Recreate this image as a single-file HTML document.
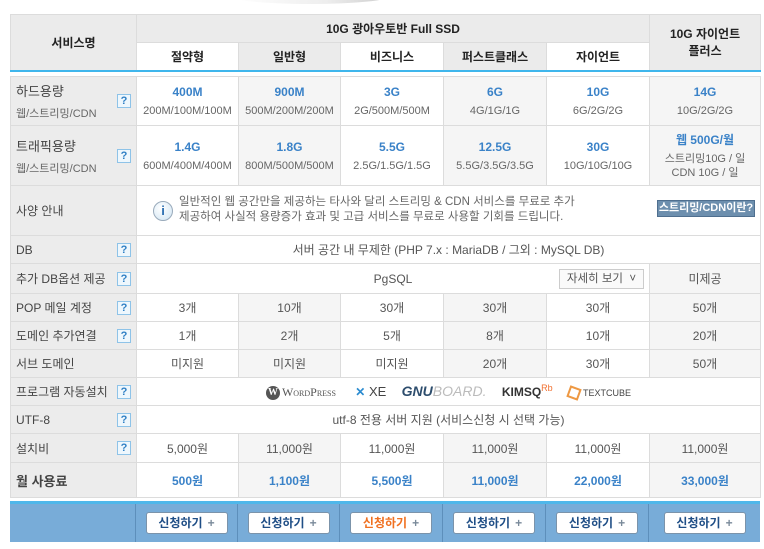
<!DOCTYPE html>
<html><head><meta charset="utf-8">
<style>
*{margin:0;padding:0;box-sizing:border-box}
body{width:764px;height:549px;background:#fff;font-family:"Liberation Sans","Noto Sans CJK KR",sans-serif;font-size:12px;color:#555;position:relative;overflow:hidden}
table{border-collapse:collapse;table-layout:fixed;position:absolute;left:10px;width:750px}
td{border:1px solid #dcdcdc;text-align:center;vertical-align:middle;padding:0}
.g{background:#f5f5f5}
.lab{background:#ececec;text-align:left;padding-left:5px;color:#444;font-size:12px;position:relative}
.q{position:absolute;right:5px;top:50%;margin-top:-7px;width:14px;height:14px;border:1px solid #8ec3e8;background:#eef7fd;color:#2f7fc4;font-weight:bold;font-size:11px;line-height:12px;text-align:center}
.b{color:#3a82c8;font-weight:bold;font-size:12px}
.s{font-size:11px;color:#666;margin-top:6px}
#hd td{background:#ebebeb;color:#222;font-weight:bold;font-size:12px}
#hd td.w{background:#fff}
#bar{position:absolute;left:10px;top:501px;width:750px;height:41px;background:#78acd8;border-top:3px solid #4fb7ea;display:flex}
#bar div{border-right:1px solid #5d8fbb;height:100%;display:flex;align-items:center;justify-content:center}
.btn{width:82px;height:22px;background:#fff;border:1px solid #7b93aa;border-radius:3px;font-weight:bold;color:#1f4e86;font-size:12px;line-height:20px;text-align:center}
.btn i{font-style:normal;color:#7a8a9a;margin-left:5px}
</style></head><body>
<div style="position:absolute;left:230px;top:-12px;width:160px;height:16px;border-radius:50%;background:linear-gradient(90deg,#fff,#ddd 60%,#999);opacity:.5"></div>
<table id="hd" style="top:14px;border-bottom:2px solid #3fb6ec">
<colgroup><col style="width:126px"><col style="width:102px"><col style="width:102px"><col style="width:103px"><col style="width:103px"><col style="width:103px"><col style="width:111px"></colgroup>
<tr style="height:28px"><td rowspan="2">서비스명</td><td colspan="5">10G 광아우토반 Full SSD</td><td rowspan="2">10G 자이언트<br>플러스</td></tr>
<tr style="height:28px"><td class="w">절약형</td><td>일반형</td><td class="w">비즈니스</td><td>퍼스트클래스</td><td class="w">자이언트</td></tr>
</table>
<div style="position:absolute;left:10px;top:70px;width:750px;height:2px;background:#3fb6ec"></div>
<table style="top:76px">
<colgroup><col style="width:126px"><col style="width:102px"><col style="width:102px"><col style="width:103px"><col style="width:103px"><col style="width:103px"><col style="width:111px"></colgroup>
<tr style="height:49px"><td class="lab"><div style="font-size:13px">하드용량</div><div class="s" style="margin-top:5px">웹/스트리밍/CDN</div><span class="q">?</span></td>
<td><div class="b">400M</div><div class="s">200M/100M/100M</div></td>
<td class="g"><div class="b">900M</div><div class="s">500M/200M/200M</div></td>
<td><div class="b">3G</div><div class="s">2G/500M/500M</div></td>
<td class="g"><div class="b">6G</div><div class="s">4G/1G/1G</div></td>
<td><div class="b">10G</div><div class="s">6G/2G/2G</div></td>
<td class="g"><div class="b">14G</div><div class="s">10G/2G/2G</div></td></tr>
<tr style="height:60px"><td class="lab"><div style="font-size:13px">트래픽용량</div><div class="s" style="margin-top:5px">웹/스트리밍/CDN</div><span class="q">?</span></td>
<td><div class="b">1.4G</div><div class="s">600M/400M/400M</div></td>
<td class="g"><div class="b">1.8G</div><div class="s">800M/500M/500M</div></td>
<td><div class="b">5.5G</div><div class="s">2.5G/1.5G/1.5G</div></td>
<td class="g"><div class="b">12.5G</div><div class="s">5.5G/3.5G/3.5G</div></td>
<td><div class="b">30G</div><div class="s">10G/10G/10G</div></td>
<td class="g"><div class="b">웹 500G/월</div><div class="s" style="margin-top:4px;line-height:14px">스트리밍10G / 일<br>CDN 10G / 일</div></td></tr>
<tr style="height:50px"><td class="lab">사양 안내</td><td colspan="6" style="text-align:left;position:relative">
<div style="position:absolute;left:16px;top:15px;width:20px;height:20px;border-radius:50%;background:radial-gradient(circle at 40% 35%,#fff,#cfe4f3);border:1px solid #9ab;color:#2a6db0;font-weight:bold;text-align:center;line-height:18px;font-size:13px">i</div>
<div style="position:absolute;left:42px;top:9px;font-size:11.5px;color:#666;line-height:15px">일반적인 웹 공간만을 제공하는 타사와 달리 스트리밍 &amp; CDN 서비스를 무료로 추가<br>제공하여 사실적 용량증가 효과 및 고급 서비스를 무료로 사용할 기회를 드립니다.</div>
<div style="position:absolute;right:5px;top:14px;width:98px;height:17px;background:#6d8fae;border:1px solid #4f6f8f;color:#fff;font-weight:bold;font-size:11px;line-height:15px;text-align:center">스트리밍/CDN이란?</div></td></tr>
<tr style="height:28px"><td class="lab">DB<span class="q">?</span></td><td colspan="6">서버 공간 내 무제한 (PHP 7.x : MariaDB / 그외 : MySQL DB)</td></tr>
<tr style="height:30px"><td class="lab">추가 DB옵션 제공<span class="q">?</span></td><td colspan="5" style="position:relative">PgSQL<div style="position:absolute;right:5px;top:5px;width:85px;height:20px;border:1px solid #ccc;background:#fafafa;font-size:11.5px;line-height:18px">자세히 보기 &nbsp;˅</div></td><td class="g">미제공</td></tr>
<tr style="height:28px"><td class="lab">POP 메일 계정<span class="q">?</span></td><td>3개</td><td class="g">10개</td><td>30개</td><td class="g">30개</td><td>30개</td><td class="g">50개</td></tr>
<tr style="height:28px"><td class="lab">도메인 추가연결<span class="q">?</span></td><td>1개</td><td class="g">2개</td><td>5개</td><td class="g">8개</td><td>10개</td><td class="g">20개</td></tr>
<tr style="height:28px"><td class="lab">서브 도메인</td><td>미지원</td><td class="g">미지원</td><td>미지원</td><td class="g">20개</td><td>30개</td><td class="g">50개</td></tr>
<tr style="height:28px"><td class="lab">프로그램 자동설치<span class="q">?</span></td><td colspan="6" style="font-size:12px">
<span style="display:inline-block;width:14px;height:14px;border-radius:50%;background:#555;color:#fff;font:bold 10px 'Liberation Serif',serif;line-height:14px;vertical-align:middle">W</span><span style="font:12px 'Liberation Serif',serif;color:#555;font-variant:small-caps;margin-left:2px">WordPress</span>
<span style="margin-left:16px;color:#2a8bd0;font-weight:bold">✕</span><span style="color:#444;font-size:13px"> XE</span>
<span style="margin-left:12px;color:#2d4d6d;font-weight:bold;font-style:italic;font-size:14px">GNU</span><span style="color:#bbb;font-style:italic;font-size:14px">BOARD.</span>
<span style="margin-left:12px;color:#333;font-weight:bold;font-size:12px">KIMSQ</span><sup style="color:#f07030;font-size:9px">Rb</sup>
<span style="margin-left:12px;display:inline-block;width:12px;height:12px;border:2px solid #e94;transform:rotate(20deg);vertical-align:middle"></span><span style="font-size:9px;color:#444;margin-left:3px">TEXTCUBE</span></td></tr>
<tr style="height:28px"><td class="lab">UTF-8<span class="q">?</span></td><td colspan="6">utf-8 전용 서버 지원 (서비스신청 시 선택 가능)</td></tr>
<tr style="height:29px"><td class="lab">설치비<span class="q">?</span></td><td>5,000원</td><td class="g">11,000원</td><td>11,000원</td><td class="g">11,000원</td><td>11,000원</td><td class="g">11,000원</td></tr>
<tr style="height:35px"><td class="lab" style="font-weight:bold;font-size:13px">월 사용료</td><td class="b">500원</td><td class="b g">1,100원</td><td class="b">5,500원</td><td class="b g">11,000원</td><td class="b">22,000원</td><td class="b g">33,000원</td></tr>
</table>
<div id="bar">
<div style="width:126px"></div>
<div style="width:102px"><span class="btn">신청하기<i>+</i></span></div>
<div style="width:102px"><span class="btn">신청하기<i>+</i></span></div>
<div style="width:103px"><span class="btn" style="color:#f07020">신청하기<i>+</i></span></div>
<div style="width:103px"><span class="btn">신청하기<i>+</i></span></div>
<div style="width:103px"><span class="btn">신청하기<i>+</i></span></div>
<div style="width:111px;border-right:0"><span class="btn">신청하기<i>+</i></span></div>
</div>
</body></html>
